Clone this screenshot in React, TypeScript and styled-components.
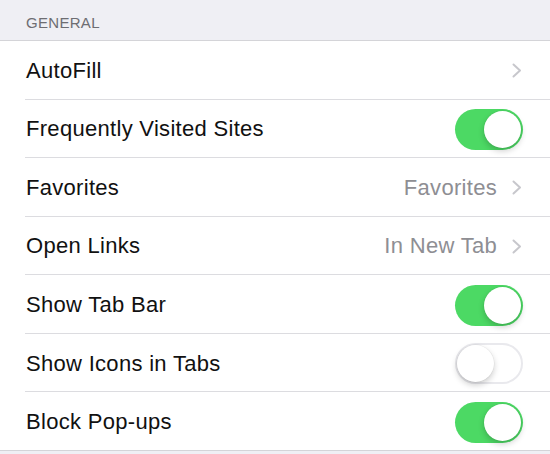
import styled, { createGlobalStyle } from 'styled-components'

const GlobalStyle = createGlobalStyle`
  html, body {
    margin: 0;
    padding: 0;
    background: #efeff4;
  }
  body {
    font-family: "Liberation Sans", Arial, sans-serif;
    -webkit-font-smoothing: antialiased;
  }
`

type Item = {
  label: string
  detail?: string
  chevron?: boolean
  toggle?: boolean
}

const items: Item[] = [
  { label: 'AutoFill', chevron: true },
  { label: 'Frequently Visited Sites', toggle: true },
  { label: 'Favorites', detail: 'Favorites', chevron: true },
  { label: 'Open Links', detail: 'In New Tab', chevron: true },
  { label: 'Show Tab Bar', toggle: true },
  { label: 'Show Icons in Tabs', toggle: false },
  { label: 'Block Pop-ups', toggle: true },
]

export default function App() {
  return (
    <>
      <GlobalStyle />
      <Page>
        <SectionHeader>GENERAL</SectionHeader>
        <List>
          {items.map((item, i) => (
            <Row key={item.label} last={i === items.length - 1}>
              <Label>{item.label}</Label>
              <Accessory>
                {item.detail && <Detail>{item.detail}</Detail>}
                {item.chevron && <Chevron />}
                {item.toggle !== undefined && <Toggle on={item.toggle} />}
              </Accessory>
            </Row>
          ))}
        </List>
      </Page>
    </>
  )
}

function Chevron() {
  return (
    <ChevronSvg width="10" height="15" viewBox="0 0 10 15">
      <path d="M1.5 1.5 L8 7.5 L1.5 13.5" fill="none" stroke="#c7c7cc" strokeWidth="2" strokeLinecap="round" strokeLinejoin="round" />
    </ChevronSvg>
  )
}

function Toggle({ on }: { on: boolean }) {
  return (
    <Track on={on}>
      <Knob on={on} />
    </Track>
  )
}

const Page = styled.div`
  width: 550px;
  height: 454px;
  background: #efeff4;
  overflow: hidden;
`

const SectionHeader = styled.div`
  height: 41px;
  box-sizing: border-box;
  padding: 14px 0 0 26px;
  font-size: 15px;
  color: #6d6d72;
  letter-spacing: 0.3px;
  border-bottom: 1px solid #d4d4d8;
`

const List = styled.div`
  background: #fff;
`

const Row = styled.div<{ last?: boolean }>`
  position: relative;
  height: 58.57px;
  box-sizing: border-box;
  display: flex;
  align-items: center;
  justify-content: space-between;
  padding: 1px 27px 0 26px;

  &::after {
    content: '';
    position: absolute;
    left: ${({ last }) => (last ? '0' : '25px')};
    right: 0;
    bottom: 0;
    height: 1px;
    background: ${({ last }) => (last ? '#d4d4d8' : '#dcdce0')};
  }
`

const Label = styled.span`
  font-size: 22px;
  letter-spacing: 0.3px;
  color: #111;
`

const Accessory = styled.div`
  display: flex;
  align-items: center;
  gap: 15px;
`

const Detail = styled.span`
  font-size: 22px;
  letter-spacing: 0.3px;
  color: #8e8e93;
`

const ChevronSvg = styled.svg`
  display: block;
  margin-right: 1px;
`

const Track = styled.div<{ on: boolean }>`
  position: relative;
  width: 68px;
  height: 41px;
  border-radius: 21px;
  box-sizing: border-box;
  background: ${({ on }) => (on ? '#4cd964' : '#fff')};
  border: ${({ on }) => (on ? 'none' : '2px solid #e9e9ed')};
`

const Knob = styled.div<{ on: boolean }>`
  position: absolute;
  top: ${({ on }) => (on ? '2px' : '0')};
  left: ${({ on }) => (on ? '29px' : '-0.5px')};
  width: 37px;
  height: 37px;
  border-radius: 50%;
  background: #fff;
  box-shadow: 0 3px 6px rgba(0, 0, 0, 0.2), 0 0 0 0.5px rgba(0, 0, 0, 0.06);
`
